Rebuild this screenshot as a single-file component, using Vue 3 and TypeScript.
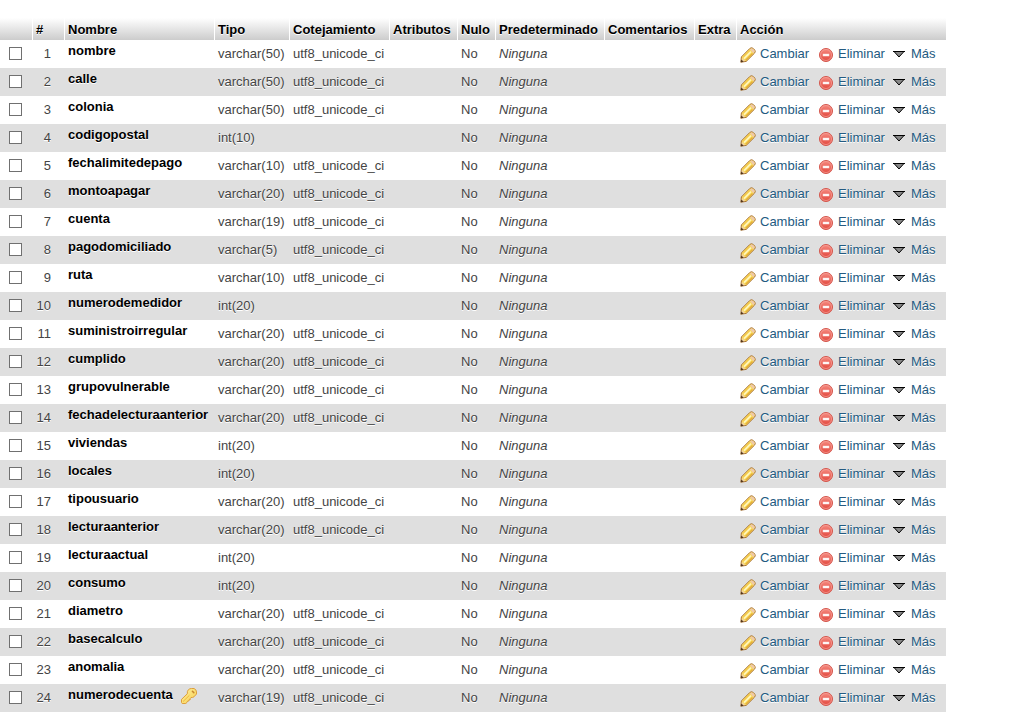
<script setup lang="ts">
interface Column {
  name: string
  type: string
  primary?: boolean
}

const headings: string[] = [
  'Nombre', 'Tipo', 'Cotejamiento', 'Atributos', 'Nulo',
  'Predeterminado', 'Comentarios', 'Extra', 'Acción',
]

const columns: Column[] = [
  { name: 'nombre', type: 'varchar(50)' },
  { name: 'calle', type: 'varchar(50)' },
  { name: 'colonia', type: 'varchar(50)' },
  { name: 'codigopostal', type: 'int(10)' },
  { name: 'fechalimitedepago', type: 'varchar(10)' },
  { name: 'montoapagar', type: 'varchar(20)' },
  { name: 'cuenta', type: 'varchar(19)' },
  { name: 'pagodomiciliado', type: 'varchar(5)' },
  { name: 'ruta', type: 'varchar(10)' },
  { name: 'numerodemedidor', type: 'int(20)' },
  { name: 'suministroirregular', type: 'varchar(20)' },
  { name: 'cumplido', type: 'varchar(20)' },
  { name: 'grupovulnerable', type: 'varchar(20)' },
  { name: 'fechadelecturaanterior', type: 'varchar(20)' },
  { name: 'viviendas', type: 'int(20)' },
  { name: 'locales', type: 'int(20)' },
  { name: 'tipousuario', type: 'varchar(20)' },
  { name: 'lecturaanterior', type: 'varchar(20)' },
  { name: 'lecturaactual', type: 'int(20)' },
  { name: 'consumo', type: 'int(20)' },
  { name: 'diametro', type: 'varchar(20)' },
  { name: 'basecalculo', type: 'varchar(20)' },
  { name: 'anomalia', type: 'varchar(20)' },
  { name: 'numerodecuenta', type: 'varchar(19)', primary: true },
]

const collation = (type: string): string => (type.startsWith('varchar') ? 'utf8_unicode_ci' : '')
</script>

<template>
  <main class="structure">
    <svg class="defs" aria-hidden="true">
      <defs>
        <linearGradient id="stop-fill" x1="0" y1="0" x2="0" y2="1">
          <stop offset="0" stop-color="#f58a80" />
          <stop offset="1" stop-color="#e2483e" />
        </linearGradient>
        <linearGradient id="key-fill" x1="0" y1="0" x2="1" y2="1">
          <stop offset="0" stop-color="#fdf0a0" />
          <stop offset="1" stop-color="#f8cf4c" />
        </linearGradient>
        <symbol id="pencil" viewBox="0 0 16 16">
          <path d="M.8 15.2 L1.4 9.9 L9.9 1.4 Q11.4 .2 12.9 1.2 L14.8 3.1 Q15.8 4.6 14.6 6.1 L6.2 14.4 Z" fill="#f8d95c" stroke="#a8733a" />
          <path d="M2.8 10.4 L9.6 3.6" stroke="#f4cb4d" stroke-width="1.6" />
          <path d="M4 11.6 L10.9 4.7" stroke="#fff6bc" stroke-width="1.7" />
          <path d="M5.7 13.2 L12.4 6.5" stroke="#e6ae35" stroke-width="1.2" />
          <path d="M10 2.3 L11 1.6 Q12 1.1 12.8 1.8 L14.3 3.3 Q15 4.4 14.3 5.3 L13.4 6.2 Z" fill="#efc9a8" />
          <path d="M1.6 14.5 L2 10.9 L5.2 14 Z" fill="#f2d3a4" />
          <path d="M.8 15.3 L1.3 12.5 L3.7 14.7 Z" fill="#51351e" />
        </symbol>
        <symbol id="stop" viewBox="0 0 16 16">
          <circle cx="8" cy="8" r="6.5" fill="url(#stop-fill)" stroke="#d4564c" />
          <circle cx="8" cy="8" r="5.5" fill="none" stroke="#f6a59c" stroke-width=".7" />
          <rect x="5" y="7" width="6" height="2" fill="#fff" stroke="#fbdcd9" stroke-width=".5" />
        </symbol>
        <symbol id="more" viewBox="0 0 16 16">
          <path d="M3 4.5 H13 L8 10 Z" fill="#888" stroke="#000" />
          <path d="M2 4.5 H14" stroke="#000" />
        </symbol>
        <symbol id="key" viewBox="0 0 16 16">
          <path d="M7.5 1.6 Q8.8 .5 10.5 .5 H13 Q15.5 1.5 15.5 4 V6 L13 8.8 Q11.5 9.8 10 9.5 L9.3 10.3 V11.6 L8 11.8 L7.8 13 L6.5 13.2 L6.2 14.2 L4.8 15.5 H1.2 L.5 14.5 V11.4 L6.3 5.8 Q6 3 7.5 1.6 Z" fill="url(#key-fill)" stroke="#dd9f3c" />
          <path d="M2 13.6 L8.4 7.3" stroke="#f0b63c" />
          <path d="M11.4 3.2 L12.8 4.6" stroke="#c8882f" stroke-width="1.5" stroke-linecap="round" />
        </symbol>
      </defs>
    </svg>

    <table class="columns">
      <colgroup>
        <col class="c-check" /><col class="c-num" /><col class="c-name" /><col class="c-type" />
        <col class="c-coll" /><col class="c-attr" /><col class="c-null" /><col class="c-default" />
        <col class="c-comment" /><col class="c-extra" /><col class="c-action" />
      </colgroup>
      <thead>
        <tr>
          <th></th>
          <th scope="col">#</th>
          <th v-for="heading in headings" :key="heading" scope="col">{{ heading }}</th>
        </tr>
      </thead>
      <tbody>
        <tr v-for="(column, index) in columns" :key="column.name">
          <td class="check">
            <input :id="`check-${index}`" type="checkbox" :aria-labelledby="`name-${index}`" />
          </td>
          <td class="num">{{ index + 1 }}</td>
          <th scope="row" class="name">
            <label :id="`name-${index}`" :for="`check-${index}`">{{ column.name }}</label>
            <svg v-if="column.primary" class="icon key" role="img" aria-label="Primaria"><use href="#key" /></svg>
          </th>
          <td>{{ column.type }}</td>
          <td>{{ collation(column.type) }}</td>
          <td></td>
          <td>No</td>
          <td><i>Ninguna</i></td>
          <td></td>
          <td></td>
          <td>
            <div class="actions">
              <a href="#cambiar"><svg class="icon" aria-hidden="true"><use href="#pencil" /></svg>Cambiar</a>
              <a href="#eliminar"><svg class="icon" aria-hidden="true"><use href="#stop" /></svg>Eliminar</a>
              <a href="#mas"><svg class="icon" aria-hidden="true"><use href="#more" /></svg>Más</a>
            </div>
          </td>
        </tr>
      </tbody>
    </table>
  </main>
</template>

<style>
body {
  margin: 0;
  background: #fff;
}
</style>

<style scoped>
.structure {
  padding: 18px 0 14px;
  font: 13px/16px "Liberation Sans", Arial, sans-serif;
  color: #444;
}
.defs {
  position: absolute;
  width: 0;
  height: 0;
}
.columns {
  border-collapse: separate;
  border-spacing: 0;
  white-space: nowrap;
}
.c-check, .c-num { width: 32px; }
.c-name { width: 150px; }
.c-type { width: 75px; }
.c-coll { width: 100px; }
.c-attr { width: 68px; }
.c-null { width: 38px; }
.c-default { width: 109px; }
.c-comment { width: 90px; }
.c-extra { width: 42px; }
.c-action { width: 210px; }

thead th {
  height: 22px;
  box-sizing: border-box;
  padding: 4px 0 2px 3px;
  border-left: 1px solid #fff;
  background: linear-gradient(#fff, #ccc);
  color: #000;
  font-weight: bold;
  text-align: left;
  text-shadow: 0 1px 0 #fff;
}
thead th:first-child {
  border-left: 0;
}
tbody td,
tbody th {
  height: 28px;
  box-sizing: border-box;
  padding: 6px 0 5px 4px;
  vertical-align: top;
  text-shadow: 0 1px 0 #fff;
}
tbody tr:nth-child(even) {
  background: #dfdfdf;
}
tbody .check {
  padding: 7px 0 0 9px;
}
.check input {
  display: block;
  width: 13px;
  height: 13px;
  box-sizing: border-box;
  margin: 0;
  appearance: none;
  border: 1px solid #707070;
  background: #fff;
}
.check input:checked {
  background: #235a81;
}
tbody .num {
  padding-right: 13px;
  text-align: right;
}
tbody .name {
  padding-top: 3px;
  color: #000;
  text-align: left;
}
.icon {
  flex: none;
  width: 16px;
  height: 16px;
  fill: none;
}
.key {
  margin: 1px 0 0 8px;
  vertical-align: top;
}
.actions {
  display: grid;
  grid-template-columns: 78px 73px auto;
  height: 17px;
}
.actions a {
  display: flex;
  gap: 4px;
  color: #235a81;
  text-decoration: none;
}
.actions a .icon {
  margin-top: 1px;
}
</style>
